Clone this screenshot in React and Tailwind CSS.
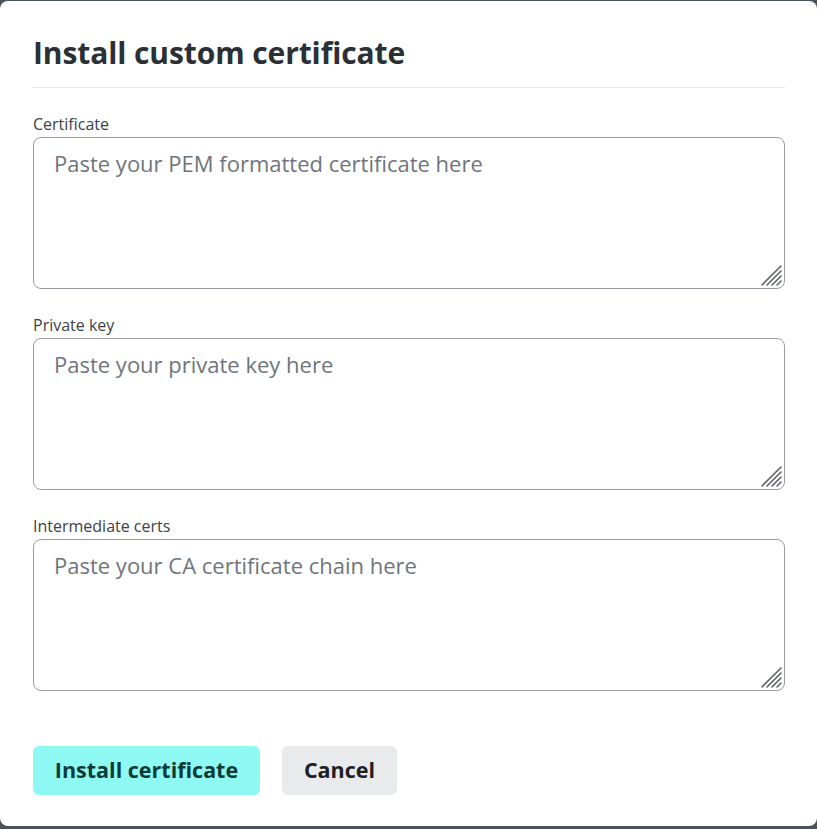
import React from "react";

const fields = [
  { label: "Certificate", placeholder: "Paste your PEM formatted certificate here" },
  { label: "Private key", placeholder: "Paste your private key here" },
  { label: "Intermediate certs", placeholder: "Paste your CA certificate chain here" },
];

function Grip() {
  return (
    <svg
      className="pointer-events-none absolute bottom-[1px] right-[1px]"
      width="24"
      height="24"
      viewBox="0 0 24 24"
    >
      <g stroke="#5f6368" strokeWidth="1.6" strokeLinecap="round">
        <line x1="2" y1="21" x2="21" y2="2" />
        <line x1="7" y1="21" x2="21" y2="7" />
        <line x1="12" y1="21" x2="21" y2="12" />
        <line x1="17" y1="21" x2="21" y2="17" />
      </g>
    </svg>
  );
}

export default function App() {
  return (
    <div
      className="h-[829px] w-[817px] overflow-hidden bg-[#4b5259] pt-px"
      style={{ fontFamily: '"Open Sans", "Noto Sans", sans-serif' }}
    >
      <div className="h-[825px] rounded-lg bg-white pl-[33px] pr-[32px] pt-[30px]">
        <h2 className="text-[30px] font-bold leading-[44px] text-[#2b3035] tracking-[-0.1px]">
          Install custom certificate
        </h2>
        <div className="mt-[12px] h-px bg-[#e7e8ea]" />

        <div className="mt-[25px] flex flex-col gap-[25px]">
          {fields.map((f) => (
            <div key={f.label} className="flex flex-col">
              <label className="mb-[2px] text-[16px] leading-[22px] text-[#3d4247]">{f.label}</label>
              <div className="relative">
                <textarea
                  className="block h-[152px] w-full resize-none rounded-[8px] border border-[#9a9da1] px-[20px] pt-[9px] pb-[10px] text-[22px] leading-[32px] text-[#2b3035] placeholder:text-[#6f757b] outline-none"
                  placeholder={f.placeholder}
                />
                <Grip />
              </div>
            </div>
          ))}
        </div>

        <div className="mt-[55px] flex gap-[22px]">
          <button
            type="button"
            className="h-[49px] w-[227px] rounded-[6px] bg-[#8ef9f3] text-[21.5px] font-bold text-[#0d3b38]"
          >
            Install certificate
          </button>
          <button
            type="button"
            className="h-[49px] w-[115px] rounded-[6px] bg-[#e9eaec] text-[21.5px] font-bold text-[#1d2125]"
          >
            Cancel
          </button>
        </div>
      </div>
    </div>
  );
}
